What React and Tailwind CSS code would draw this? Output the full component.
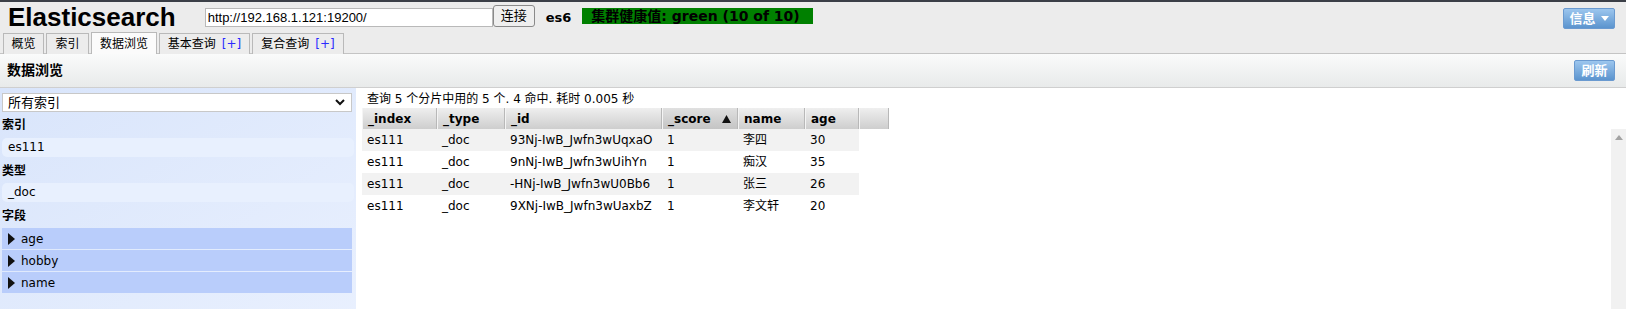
const sans = "font-['DejaVu_Sans','Noto_Sans_CJK_SC',sans-serif]"

const rows = [
  ['es111', '_doc', '93Nj-IwB_Jwfn3wUqxaO', '1', '李四', '30'],
  ['es111', '_doc', '9nNj-IwB_Jwfn3wUihYn', '1', '痴汉', '35'],
  ['es111', '_doc', '-HNj-IwB_Jwfn3wU0Bb6', '1', '张三', '26'],
  ['es111', '_doc', '9XNj-IwB_Jwfn3wUaxbZ', '1', '李文轩', '20'],
]

const tabs = [
  { label: '概览', w: 'w-[41px]' },
  { label: '索引', w: 'w-[43px]' },
  { label: '数据浏览', w: 'w-[66px]', active: true },
  { label: '基本查询', w: 'w-[91px]', plus: true },
  { label: '复合查询', w: 'w-[92px]', plus: true },
]

function BlueButton({ children, className = '' }) {
  return (
    <button className={`flex items-center justify-center gap-[5px] rounded-[2px] border border-[#6a9ad0] bg-linear-to-b from-[#9cc6ee] to-[#5b94ce] text-white font-bold text-[13px] ${className}`}>
      {children}
    </button>
  )
}

function Triangle() {
  return (
    <svg width="7" height="12" viewBox="0 0 7 12" className="shrink-0">
      <path d="M0 0 L7 6 L0 12 Z" fill="#111" />
    </svg>
  )
}

export default function App() {
  return (
    <div className={`h-[309px] w-[1626px] overflow-hidden bg-white text-black text-[12px] ${sans}`}>
      {/* top bar */}
      <div className="h-[2px] bg-[#3b3f47]" />
      <div className="bg-[#ececec] border-b border-[#c4c4c4] h-[52px] flex flex-col">
        <div className="flex items-start h-[31px]">
          <h1 className="ml-[8px] font-['Liberation_Sans',sans-serif] font-bold text-[26px] leading-[30px]">Elasticsearch</h1>
          <input
            readOnly
            value="http://192.168.1.121:19200/"
            className="ml-[29px] mt-[6px] w-[288px] h-[19px] bg-white border border-[#b9b9b9] px-[2px] font-['Liberation_Sans',sans-serif] text-[13px] outline-none"
          />
          <button className="mt-[3px] w-[42px] h-[22px] rounded-[3px] border border-[#8a8a8a] bg-[#efefef] text-[13px] leading-[20px]">连接</button>
          <span className="ml-[11px] mt-[7px] font-bold text-[13px] leading-[18px]">es6</span>
          <div className="ml-[11px] mt-[6px] w-[231px] h-[16px] bg-[#008000] pl-[9px] font-bold text-[14px] leading-[16px] whitespace-nowrap">
            集群健康值: green (10 of 10)
          </div>
          <div className="flex-1" />
          <BlueButton className="mt-[6px] mr-[11px] w-[52px] h-[21px]">
            信息
            <svg width="8" height="5" viewBox="0 0 8 5"><path d="M0 0 L8 0 L4 5 Z" fill="#fff" /></svg>
          </BlueButton>
        </div>
        <div className="flex items-end h-[21px] pl-[3px] gap-[2px]">
          {tabs.map(t => (
            <div
              key={t.label}
              className={`${t.w} h-[21px] flex items-center justify-center border border-b-0 border-[#b9b9b9] whitespace-nowrap -mb-px ${t.active ? 'bg-[#fbfbfb] h-[22px]' : 'bg-[#ececec]'}`}
            >
              {t.label}
              {t.plus && <span className="ml-[6px] text-[#2a2aff]">[+]</span>}
            </div>
          ))}
        </div>
      </div>

      {/* page header */}
      <div className="h-[34px] flex items-center justify-between bg-linear-to-b from-[#fafbfb] to-[#e8eaea] border-b border-[#cfcfcf]">
        <h2 className="ml-[7px] font-bold text-[14px]">数据浏览</h2>
        <BlueButton className="mr-[11px] w-[41px] h-[21px]">刷新</BlueButton>
      </div>

      <div className="flex h-[240px]">
        {/* sidebar */}
        <div className="w-[356px] shrink-0 bg-linear-to-br from-[#d9e5fb] to-[#e9f0fe] px-[2px] pt-[5px]">
          <div className="h-[19px] w-[350px] bg-white border border-[#c8c8c8] flex items-center justify-between pl-[5px] pr-[6px] text-[13px]">
            <span>所有索引</span>
            <svg width="10" height="7" viewBox="0 0 10 7"><path d="M1 1 L5 5 L9 1" stroke="#111" strokeWidth="2" fill="none" /></svg>
          </div>
          <div className="mt-[3px] font-bold leading-[20px]">索引</div>
          <div className="mt-[3px] h-[19px] rounded-[5px] bg-[#e8f0fe] pl-[6px] leading-[19px]">es111</div>
          <div className="mt-[4px] font-bold leading-[20px]">类型</div>
          <div className="mt-[2px] h-[19px] rounded-[5px] bg-[#e8f0fe] pl-[6px] leading-[19px]">_doc</div>
          <div className="mt-[4px] font-bold leading-[20px]">字段</div>
          <div className="mt-[2px] flex flex-col gap-px w-[350px]">
            {['age', 'hobby', 'name'].map(f => (
              <div key={f} className="h-[21px] bg-[#b9cdfb] flex items-center gap-[6px] pl-[6px]">
                <Triangle />
                <span>{f}</span>
              </div>
            ))}
          </div>
        </div>

        {/* results */}
        <div className="flex-1 flex flex-col pl-[6px]">
          <div className="h-[20px] pl-[5px] leading-[22px] whitespace-nowrap">查询 5 个分片中用的 5 个. 4 命中. 耗时 0.005 秒</div>
          <div className="grid grid-cols-[75px_68px_157px_76px_67px_54px_30px] h-[21px] w-[527px] font-bold">
            {['_index', '_type', '_id', '_score', 'name', 'age', ''].map((h, i) => (
              <div
                key={i}
                className={`flex items-center justify-between pl-[5px] pr-[6px] border-l border-l-[#f4f4f4] border-r border-r-[#b8b8b8] bg-linear-to-b ${h === '_score' ? 'from-[#e0e0e0] to-[#c4c4c4]' : 'from-[#efefef] to-[#cecece]'}`}
              >
                <span>{h}</span>
                {h === '_score' && (
                  <svg width="9" height="8" viewBox="0 0 9 8"><path d="M0 8 L4.5 0 L9 8 Z" fill="#111" /></svg>
                )}
              </div>
            ))}
          </div>
          <div className="flex flex-1">
            <div className="flex-1">
              {rows.map((r, i) => (
                <div
                  key={r[2]}
                  className={`grid grid-cols-[75px_68px_157px_76px_67px_54px] w-[497px] h-[22px] items-center ${i % 2 === 0 ? 'bg-[#f2f2f2]' : 'bg-white'}`}
                >
                  {r.map((c, j) => (
                    <div key={j} className="pl-[5px] whitespace-nowrap">{c}</div>
                  ))}
                </div>
              ))}
            </div>
            <div className="w-[15px] bg-[#f1f1f1] flex justify-center pt-[6px]">
              <svg width="8" height="5" viewBox="0 0 8 5"><path d="M0 5 L4 0 L8 5 Z" fill="#a3a3a3" /></svg>
            </div>
          </div>
        </div>
      </div>
    </div>
  )
}
